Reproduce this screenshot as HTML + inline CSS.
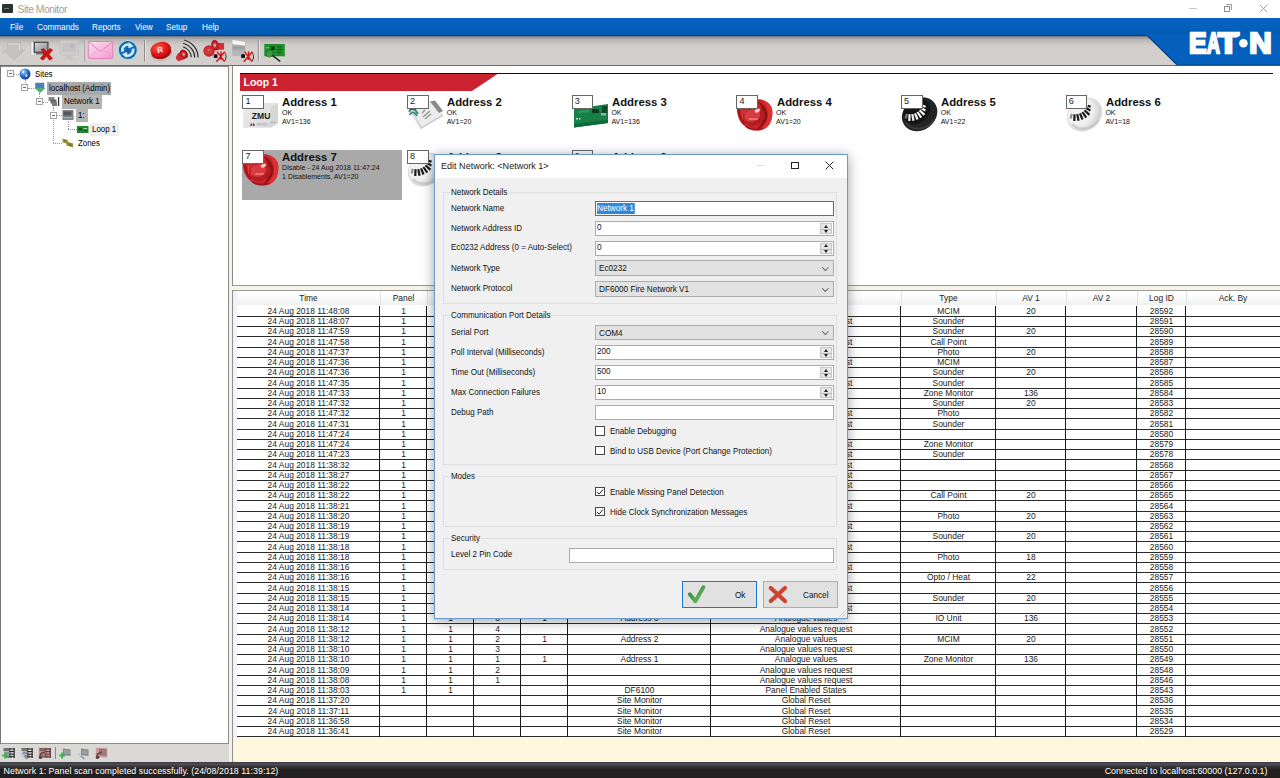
<!DOCTYPE html>
<html><head><meta charset="utf-8"><title>Site Monitor</title>
<style>
*{box-sizing:border-box;margin:0;padding:0}
html,body{width:1280px;height:778px;overflow:hidden;background:#fff}
body{position:relative;font-family:"Liberation Sans",sans-serif;font-size:8.3px;color:#000}
.abs{position:absolute}
.t{position:absolute;white-space:nowrap;line-height:1}
#titlebar{left:0;top:0;width:1280px;height:18px;background:#fff}
#menubar{left:0;top:17.5px;width:1280px;height:17.5px;background:linear-gradient(#0862c2,#055fbd 55%,#0459b0)}
#menubar span{position:absolute;top:4.2px;color:#fff;font-size:9.1px;line-height:10px;transform-origin:0 50%;transform:scaleX(.9)}
#toolbar{left:0;top:34.8px;width:1280px;height:31.5px;background:linear-gradient(#0a2c5e 0,#3a4560 .9px,#8c8d8f 1.7px,#b6b2b2 4.5px,#cdc9c7 9px,#d3cfcd 13px,#d3cfcd 100%);border-bottom:1.4px solid #6c6c6c}
#leftpane{left:0;top:65.5px;width:229px;height:678px;background:#fff;border:1px solid #8c8c8c;border-left:1px solid #777}
#leftbar{left:0;top:743.8px;width:229px;height:19px;background:#dbd9d5}
#split{left:229px;top:65.5px;width:3.5px;height:697.5px;background:#f4f1ea}
#toppane{left:232px;top:65.5px;width:1048px;height:220px;background:#fff;border-left:1.5px solid #8a8a8a;border-bottom:1px solid #9a9a9a}
#gap{left:232px;top:285.5px;width:1048px;height:4px;background:#f7f3e6}
#logpane{left:232px;top:289.5px;width:1048px;height:473.5px;background:#fef7de;border-left:1px solid #8f8f8f;border-top:1px solid #9a9a9a}
#status{left:0;top:762px;width:1280px;height:16px;background:linear-gradient(#3d3e43 0,#4b4b53 2.5px,#383637 4.5px,#2a2725 6.5px,#221f20 8.5px,#221f20 100%);color:#fff}
#status span{position:absolute;top:4.1px;font-size:8.9px;line-height:10px;white-space:nowrap}
.hl{position:absolute;background:#2a2a2a;height:1px;left:237px;width:1043px}
.vl{position:absolute;background:#1a1a1a;width:1px}
.c{position:absolute;text-align:center;white-space:nowrap;font-size:9.1px;line-height:10px;color:#1a1a1a;transform:scaleX(.926)}
.hd{position:absolute;text-align:center;white-space:nowrap;font-size:9.1px;line-height:10px;color:#222;top:292.9px;transform:scaleX(.926)}
.tree{position:absolute;white-space:nowrap;font-size:8.9px;line-height:13px;height:13.4px;padding:0 1.5px}
.tree span{display:inline-block;transform-origin:0 50%;transform:scaleX(.89)}
.exp{position:absolute;width:7px;height:7px;border:1px solid #a4a4a4;background:#fff}
.exp:after{content:"";position:absolute;left:1px;top:2px;width:3px;height:1px;background:#6a6a6a}
.num{position:absolute;width:21.8px;height:13.4px;background:#fff;border:1px solid #666;font-size:9.1px;line-height:10.6px;padding-left:2.2px;color:#222}
.at{position:absolute;white-space:nowrap;font-weight:bold;font-size:11px;line-height:12px;color:#111;transform-origin:0 50%;transform:scaleX(1.03)}
.as{position:absolute;white-space:nowrap;font-size:7px;line-height:8px;color:#111}
#dlg{left:433.5px;top:153.6px;width:414px;height:465.6px;background:#f0f0f0;border:1px solid #6a9bd0;box-shadow:0 1px 10px rgba(20,30,50,.30), 0 4px 14px rgba(0,0,0,.14)}
#dlgtitle{left:0;top:0;width:412px;height:23px;background:#fff}
.gb{position:absolute;border:1px solid #dfdfdf;left:8.8px;width:394.2px}
.gbl{position:absolute;background:#f0f0f0;padding:0 1px;left:15px;font-size:9.1px;line-height:10px;white-space:nowrap;color:#111;transform-origin:0 50%;transform:scaleX(.885)}
.lb{position:absolute;left:16px;font-size:9.1px;line-height:10px;white-space:nowrap;color:#111;transform-origin:0 50%;transform:scaleX(.885)}
.in{position:absolute;left:160.7px;width:238.4px;height:15px;background:#fff;border:1px solid #ababab;font-size:9.1px;line-height:11.2px;padding-left:1.2px;color:#111}
.v{display:inline-block;transform-origin:0 50%;transform:scaleX(.9);white-space:nowrap}
.cb{position:absolute;left:160.7px;width:238.4px;height:15.5px;background:#e2e2e2;border:1px solid #adadad;font-size:9.1px;line-height:14.6px;padding-left:2.4px;color:#111}
.cb:after{content:"";position:absolute;right:5px;top:3.6px;width:3.6px;height:3.6px;border-right:1px solid #5a5a5a;border-bottom:1px solid #5a5a5a;transform:rotate(45deg) }
.sp{position:absolute;right:1px;top:1px;width:11.5px;height:11px;background:linear-gradient(#e6e6e6 0,#e6e6e6 5px,#b8b8b8 5px,#b8b8b8 6px,#e6e6e6 6px);border:1px solid #c8c8c8}
.sp:before{content:"";position:absolute;left:2.7px;top:.8px;border:2.5px solid transparent;border-top:0;border-bottom:3px solid #222}
.sp:after{content:"";position:absolute;left:2.7px;top:6.2px;border:2.5px solid transparent;border-bottom:0;border-top:3px solid #222}
.ck{position:absolute;left:160.7px;width:9.5px;height:9.5px;background:#fff;border:1px solid #484848}
.ckl{position:absolute;left:175.2px;font-size:9.1px;line-height:10px;white-space:nowrap;color:#111;transform-origin:0 50%;transform:scaleX(.885)}
.btn{position:absolute;top:427px;height:27.5px;background:#e1e1e1;border:1px solid #adadad;font-size:9.1px;color:#111}
.btn .t{transform-origin:0 50%;transform:scaleX(.9)}
</style></head><body>

<div id="titlebar" class="abs">
<div class="abs" style="left:2px;top:4.2px;width:11px;height:8.6px;background:#2c3233;border-radius:1px"></div>
<div class="abs" style="left:3.5px;top:7.5px;width:5px;height:1px;background:#6d7676"></div>
<span class="t" style="left:17.5px;top:3.5px;font-size:10.3px;color:#a0a0a0;line-height:12px;letter-spacing:-.45px">Site Monitor</span>
<div class="abs" style="left:1189px;top:8px;width:8px;height:1px;background:#c4c4c4"></div>
<div class="abs" style="left:1223.5px;top:5.5px;width:6px;height:6px;border:1px solid #8c8c8c"></div>
<div class="abs" style="left:1225.5px;top:4px;width:6px;height:6px;border-top:1px solid #9c9c9c;border-right:1px solid #9c9c9c"></div>
<svg class="abs" style="left:1258.5px;top:4px" width="9" height="9" viewBox="0 0 9 9"><path d="M0.7 0.7L8.3 8.3M8.3 0.7L0.7 8.3" stroke="#a0a0a0" stroke-width="1" fill="none"/></svg>
</div>
<div id="menubar" class="abs">
<span style="left:10.2px">File</span>
<span style="left:37.2px">Commands</span>
<span style="left:91.5px">Reports</span>
<span style="left:135.4px">View</span>
<span style="left:166px">Setup</span>
<span style="left:202px">Help</span>
</div>
<div id="toolbar" class="abs"></div>
<svg class="abs" style="left:1130px;top:34px" width="150" height="32" viewBox="1130 34 150 32"><polygon points="1146,34 1280,34 1280,65.2 1177.3,65.2" fill="#055fbd"/><path d="M1147 35.3 L1177 64.8" stroke="#0a3f86" stroke-width="1.2" fill="none"/><rect x="1177" y="64.4" width="103" height="1" fill="#0b4a98"/></svg>
<svg class="abs" style="left:1180px;top:24px" width="100" height="38" viewBox="1180 24 100 38"><g fill="#fff" stroke="#fff" stroke-width="2.4" stroke-linejoin="miter" font-family="Liberation Sans, sans-serif" font-weight="bold" font-size="29.9"><text x="1189.1" y="52.8" textLength="17.5" lengthAdjust="spacingAndGlyphs">E</text><text x="1207" y="52.8" textLength="12.8" lengthAdjust="spacingAndGlyphs">A</text><text x="1218" y="52.8" textLength="20.9" lengthAdjust="spacingAndGlyphs">T</text></g><circle cx="1243.4" cy="43.2" r="8.3" fill="#055fbd"/><circle cx="1243.4" cy="43.2" r="4.3" fill="#fff"/><text x="1249.2" y="52.8" textLength="22.4" lengthAdjust="spacingAndGlyphs" fill="#fff" stroke="#fff" stroke-width="2.4" font-family="Liberation Sans, sans-serif" font-weight="bold" font-size="29.9">N</text></svg>
<svg class="abs" style="left:0;top:35px" width="300" height="31" viewBox="0 35 300 31">
<defs><radialGradient id="rb" cx="40%" cy="35%" r="70%"><stop offset="0" stop-color="#ff5a4a"/><stop offset=".6" stop-color="#e01818"/><stop offset="1" stop-color="#b00c0c"/></radialGradient><linearGradient id="env" x1="0" y1="0" x2="1" y2="1"><stop offset="0" stop-color="#fde0f0"/><stop offset="1" stop-color="#f19ccb"/></linearGradient><linearGradient id="scr" x1="0" y1="0" x2="1" y2="1"><stop offset="0" stop-color="#d8d8d8"/><stop offset="1" stop-color="#8a8a8a"/></linearGradient><linearGradient id="pnl" x1="0" y1="0" x2="0" y2="1"><stop offset="0" stop-color="#f2f2f2"/><stop offset=".45" stop-color="#9a9ea2"/><stop offset="1" stop-color="#c8cacc"/></linearGradient></defs>
<g fill="#c6c2c2" stroke="#bab6b6" stroke-width=".6"><path d="M7 42.5 H21 V50 H25 L14 60 L3 50 H7 Z"/></g><rect x="2" y="44" width="3" height="10" rx="1" fill="#cbc8c8"/><path d="M8.5 44 H19.5 V50" stroke="#dedbdb" stroke-width="1" fill="none"/>
<rect x="31" y="42" width="3.2" height="13.5" rx=".8" fill="#f4f4f4" stroke="#aaa" stroke-width=".5"/><rect x="34.3" y="42.3" width="13.6" height="10" fill="url(#scr)" stroke="#4a4a4a" stroke-width="1.3"/><rect x="36" y="53" width="9" height="1.5" fill="#777"/>
<path d="M41 49.5 L44 48.5 L46.6 52 L50 48.3 L52.8 50 L49 54.2 L52.6 58.6 L49.6 60.3 L46.4 56.3 L43 60.3 L40.2 58.4 L43.9 54.2 Z" fill="#d01010" stroke="#a00808" stroke-width=".4"/>
<rect x="60" y="40.5" width="18.5" height="14.5" rx="1" fill="#cfcccc" stroke="#c2bfbf" stroke-width=".8"/><rect x="62" y="42.5" width="14.5" height="9.5" fill="#c6c4c4"/><rect x="70" y="43.5" width="5" height="5" fill="#bdbbbb"/><rect x="66" y="55" width="6.5" height="3" fill="#c8c5c5"/><rect x="63.5" y="58" width="11.5" height="2" rx="1" fill="#cbc8c8"/>
<rect x="84.5" y="40" width="1" height="21.5" fill="#8f8c8c"/><rect x="85.5" y="40" width="1" height="21.5" fill="#e6e3e3"/>
<rect x="144.0" y="40" width="1" height="21.5" fill="#8f8c8c"/><rect x="145.0" y="40" width="1" height="21.5" fill="#e6e3e3"/>
<rect x="257.9" y="40" width="1" height="21.5" fill="#8f8c8c"/><rect x="258.9" y="40" width="1" height="21.5" fill="#e6e3e3"/>
<rect x="88.3" y="41.5" width="24.5" height="17" rx="1.5" fill="url(#env)" stroke="#e57fbb" stroke-width="1"/><path d="M89 42.3 L100.5 51.5 L112.2 42.3" stroke="#e57fbb" stroke-width="1" fill="none"/><path d="M89 57.8 L97.5 49.5 M112.2 57.8 L103.6 49.5" stroke="#ec95c6" stroke-width=".9" fill="none"/>
<circle cx="127.8" cy="50.1" r="10" fill="#a9d9f6" opacity=".85"/><circle cx="127.8" cy="50.1" r="9" fill="#1a68a4"/><circle cx="127.8" cy="50.1" r="6.6" fill="#1b6fc0"/>
<g fill="none" stroke="#cfeeff" stroke-width="2.5"><path d="M122.6 51.6 A5.4 5.4 0 0 1 130.2 45.2"/><path d="M133 48.6 A5.4 5.4 0 0 1 125.4 55"/></g><polygon points="128.8,42.2 133.6,46 128.4,48.4" fill="#cfeeff"/><polygon points="126.8,58 122,54.2 127.2,51.8" fill="#cfeeff"/><path d="M126.3 47.8 L130 49 L128.6 53 L126 52 Z" fill="#0f5aa8"/>
<ellipse cx="161.5" cy="53.5" rx="10.2" ry="7" fill="#e8e4e4" stroke="#9a9696" stroke-width=".6" transform="rotate(-12 161.5 53.5)"/><ellipse cx="161.3" cy="52.3" rx="10" ry="6.8" fill="#a80c0c" transform="rotate(-12 161.3 52.3)"/><ellipse cx="160.8" cy="49.6" rx="10.4" ry="7.6" fill="url(#rb)" transform="rotate(-12 160.8 49.6)"/>
<text x="157" y="52.6" font-family="Liberation Sans, sans-serif" font-weight="bold" font-size="8.2" fill="#ffe9e9" transform="rotate(-12 160 49)">R</text>
<g fill="none" stroke="#2a2a2a" stroke-width="1.15"><path d="M184.2 40 C192.5 42.5 198.2 49.5 198 57.6"/><path d="M183.2 43.3 C190 45.3 194.8 51 194.7 57.6"/><path d="M183.2 46.9 C187.8 48.4 191.2 52.5 191.2 57.3"/></g>
<ellipse cx="179.6" cy="57.4" rx="3.7" ry="3.3" fill="#cf2c33" transform="rotate(-35 179.6 57.4)"/><path d="M177 54.6 L182 50.5 L187 57.5 L182.3 60.3 Z" fill="#c9252c"/><ellipse cx="184" cy="54" rx="3.5" ry="4.9" fill="#ad141c" transform="rotate(-38 184 54)"/><ellipse cx="183.8" cy="54.2" rx="2.1" ry="3" fill="#c8323a" transform="rotate(-38 183.8 54.2)"/><circle cx="183.6" cy="54.4" r="1.15" fill="#ffb0b6"/>
<rect x="217.5" y="43" width="6.6" height="6.8" rx="1" fill="#d23038"/><path d="M213 40.5 L219 43 L219 50 L213.5 50.5 Z" fill="#c8262e"/><ellipse cx="214.7" cy="45.1" rx="3.5" ry="5.3" fill="#b3161e"/><ellipse cx="214.8" cy="45.2" rx="2.1" ry="3.3" fill="#cc3a42"/><circle cx="214.8" cy="45.3" r="1.2" fill="#ffb4ba"/>
<circle cx="209" cy="51" r="5.7" fill="#c6262d"/><circle cx="208.6" cy="50.6" r="3.6" fill="#d23a40"/><circle cx="208.8" cy="50" r=".7" fill="#e8a040"/>
<rect x="213.8" y="54.3" width="3.6" height="3.6" fill="#0c0c0c"/><path d="M224.3 52.3 C226.6 55 226.6 58.6 224.3 61.4" stroke="#1a1a1a" stroke-width=".9" fill="none"/><path d="M217 51.6 L224.6 61.6 M224.8 51.8 L216.4 61.8 M221 51.5 V60" stroke="#d8141c" stroke-width="1.5" fill="none"/>
<polygon points="232.5,40 245,42 245,56 232.5,55.5" fill="url(#pnl)" stroke="#a8a8a8" stroke-width=".5"/><polygon points="232.5,40 245,42 245,45.5 232.5,44" fill="#f6f6f6"/><polygon points="232.5,50 245,51 245,56 232.5,55.5" fill="#b4b8bc"/>
<rect x="241.2" y="54.3" width="3.8" height="3.6" fill="#0c0c0c"/><path d="M251.8 52.3 C254.1 55 254.1 58.6 251.8 61.4" stroke="#1a1a1a" stroke-width=".9" fill="none"/><path d="M244.5 51.6 L252.1 61.6 M252.3 51.8 L243.9 61.8 M248.5 51.5 V60" stroke="#d8141c" stroke-width="1.5" fill="none"/>
<rect x="264.3" y="44" width="20.5" height="12.3" fill="#1f8f2c"/><rect x="271" y="46.5" width="3.6" height="3.6" fill="#0b3a12"/><rect x="277" y="46.3" width="5" height="1.2" fill="#0d5a18"/><rect x="277" y="49" width="5" height="1.2" fill="#0d5a18"/><rect x="277" y="52" width="4" height="1.2" fill="#0d5a18"/><rect x="266" y="47" width="3" height="1.2" fill="#66c070"/>
<circle cx="269.5" cy="53.5" r="3.6" fill="#3f9f48" fill-opacity=".7" stroke="#226a2a" stroke-width=".8"/><path d="M272.5 55.5 L280.3 61.5" stroke="#111" stroke-width="1.5" fill="none"/>
</svg>
<div id="leftpane" class="abs"></div>
<div id="leftbar" class="abs"></div>
<div id="split" class="abs"></div>
<div class="abs" style="left:14.0px;top:73.9px;width:5.0px;height:0;border-top:1px dotted #9a9a9a"></div>
<div class="abs" style="left:24.5px;top:79.0px;width:0;height:5.7px;border-left:1px dotted #9a9a9a"></div>
<div class="abs" style="left:28.0px;top:87.7px;width:6.0px;height:0;border-top:1px dotted #9a9a9a"></div>
<div class="abs" style="left:38.8px;top:93.0px;width:0;height:5.5px;border-left:1px dotted #9a9a9a"></div>
<div class="abs" style="left:43.0px;top:101.5px;width:5.0px;height:0;border-top:1px dotted #9a9a9a"></div>
<div class="abs" style="left:53.3px;top:107.0px;width:0;height:35.9px;border-left:1px dotted #9a9a9a"></div>
<div class="abs" style="left:57.0px;top:115.3px;width:5.0px;height:0;border-top:1px dotted #9a9a9a"></div>
<div class="abs" style="left:67.7px;top:121.0px;width:0;height:8.1px;border-left:1px dotted #9a9a9a"></div>
<div class="abs" style="left:67.7px;top:129.1px;width:9.3px;height:0;border-top:1px dotted #9a9a9a"></div>
<div class="abs" style="left:53.3px;top:142.9px;width:8.7px;height:0;border-top:1px dotted #9a9a9a"></div>
<div class="exp" style="left:7.0px;top:70.4px"></div>
<div class="exp" style="left:21.3px;top:84.2px"></div>
<div class="exp" style="left:35.7px;top:98.0px"></div>
<div class="exp" style="left:50.0px;top:111.8px"></div>
<svg class="abs" style="left:19px;top:67.7px" width="12" height="12" viewBox="0 0 12 12"><defs><radialGradient id="gl" cx="35%" cy="30%" r="75%"><stop offset="0" stop-color="#9fd0ff"/><stop offset=".5" stop-color="#2f74d0"/><stop offset="1" stop-color="#123a8a"/></radialGradient></defs><circle cx="6" cy="6" r="5.5" fill="url(#gl)"/><path d="M3.5 2.5 C5 2 6 3.5 5 5 C4 6 3 5 3.5 2.5 Z M6.5 6 C8 5.5 9 7 8 9 C7 9.5 6 8 6.5 6 Z" fill="#e8f3ff" opacity=".85"/></svg>
<svg class="abs" style="left:34px;top:81.7px" width="12" height="12" viewBox="0 0 12 12"><rect x="1.5" y="1" width="8.5" height="5.5" fill="#4a7fc8" stroke="#777" stroke-width=".6"/><polygon points="0.5,6 11.5,6 6,11" fill="#4fb06a"/></svg>
<svg class="abs" style="left:48px;top:95.5px" width="12" height="12" viewBox="0 0 12 12"><rect x="0.5" y="1" width="6" height="4" fill="#8a8a8a"/><rect x="2.5" y="3.5" width="6" height="4" fill="#6a6a6a"/><rect x="4" y="6" width="5" height="4" fill="#7a7a7a"/><rect x="10" y="1" width="1.2" height="9" fill="#333"/></svg>
<svg class="abs" style="left:62px;top:109.3px" width="12" height="12" viewBox="0 0 12 12"><rect x="0.5" y="1" width="11" height="10" fill="#808488"/><rect x="1.5" y="2.5" width="8" height="4" fill="#55595e"/><rect x="1.5" y="8" width="9" height="1.5" fill="#9aa"/></svg>
<svg class="abs" style="left:77px;top:125.6px" width="12" height="8" viewBox="0 0 12 8"><rect x="0" y="0" width="11.5" height="7" fill="#1f8a2c"/><rect x="1.5" y="2" width="3.5" height="2.5" fill="#0f5a1a"/><rect x="6.5" y="2" width="3.5" height="1" fill="#9fe0a8"/><rect x="6.5" y="4" width="3.5" height="1" fill="#0f5a1a"/></svg>
<svg class="abs" style="left:62px;top:137.9px" width="12" height="10" viewBox="0 0 12 10"><polygon points="0.5,0.5 6,2 6,6 0.5,4.5" fill="#a89a3a"/><polygon points="4.5,3.5 11,5.5 11,9.5 4.5,7.5" fill="#8f8a30"/><rect x="2" y="2" width="2" height="1.5" fill="#5a7a2a"/><rect x="7" y="6" width="2" height="1.5" fill="#5a7a2a"/></svg>
<div class="tree" style="left:33.5px;top:67.7px;width:30.0px;"><span>Sites</span></div>
<div class="tree" style="left:47.3px;top:81.5px;width:63.5px;background:#a9a9a9"><span>localhost (Admin)</span></div>
<div class="tree" style="left:62.3px;top:95.3px;width:40.0px;background:#b4b4b4"><span>Network 1</span></div>
<div class="tree" style="left:76.0px;top:109.1px;width:12.3px;background:#b4b4b4"><span>1:</span></div>
<div class="tree" style="left:90.0px;top:122.9px;width:29.0px;background:#efefef"><span>Loop 1</span></div>
<div class="tree" style="left:76.5px;top:136.7px;width:30.0px;"><span>Zones</span></div>
<svg class="abs" style="left:2.3px;top:746.6px" width="14" height="13" viewBox="0 0 14 13"><rect x="1.5" y="1" width="7" height="3" fill="#6d7276"/><rect x="2.5" y="4.5" width="6.5" height="3" fill="#8a9096"/><rect x="4" y="8" width="5.5" height="2.8" fill="#7a8086"/><path d="M7 2 H12.3 M7 4.6 H12.3 M7 7.2 H12.3 M7 9.8 H12.3" stroke="#1c1c1c" stroke-width="1"/><rect x="11.6" y="1" width="1.1" height="10" fill="#1c1c1c"/><path d="M3.2 5.5 V11.5 M0.3 8.5 H6.2" stroke="#35b848" stroke-width="2"/></svg>
<svg class="abs" style="left:20.0px;top:746.6px" width="14" height="13" viewBox="0 0 14 13"><rect x="1.5" y="1" width="7" height="3" fill="#6d7276"/><rect x="2.5" y="4.5" width="6.5" height="3" fill="#8a9096"/><rect x="4" y="8" width="5.5" height="2.8" fill="#7a8086"/><path d="M7 2 H12.3 M7 4.6 H12.3 M7 7.2 H12.3 M7 9.8 H12.3" stroke="#1c1c1c" stroke-width="1"/><rect x="11.6" y="1" width="1.1" height="10" fill="#1c1c1c"/><path d="M1 6.5 L6.5 11.5" stroke="#b9cbe0" stroke-width="2.2"/><path d="M4 9 L7.5 12" stroke="#8a9097" stroke-width="1.5"/></svg>
<svg class="abs" style="left:37.5px;top:746.6px" width="14" height="13" viewBox="0 0 14 13"><rect x="1.5" y="1" width="7" height="3" fill="#6d7276"/><rect x="2.5" y="4.5" width="6.5" height="3" fill="#8a9096"/><rect x="4" y="8" width="5.5" height="2.8" fill="#7a8086"/><path d="M7 2 H12.3 M7 4.6 H12.3 M7 7.2 H12.3 M7 9.8 H12.3" stroke="#1c1c1c" stroke-width="1"/><rect x="11.6" y="1" width="1.1" height="10" fill="#1c1c1c"/><rect x="0.8" y="0.8" width="11.5" height="9.5" fill="#b05050" opacity=".45"/><path d="M2 11.5 L2.5 7 L7 5" stroke="#6a4a40" stroke-width="1.6" fill="none"/><circle cx="2.6" cy="10.3" r="1.8" fill="#5a4038"/></svg>
<svg class="abs" style="left:59.3px;top:746.6px" width="14" height="13" viewBox="0 0 14 13"><polygon points="4,1.5 11.5,2.5 11.5,9 4,8" fill="#80868c"/><polygon points="4.8,2.8 10.6,3.6 10.6,7.6 4.8,6.8" fill="#9aa0a6"/><path d="M3.2 5.5 V11.5 M0.3 8.5 H6.2" stroke="#35b848" stroke-width="2"/></svg>
<svg class="abs" style="left:77.0px;top:746.6px" width="14" height="13" viewBox="0 0 14 13"><polygon points="4,1.5 11.5,2.5 11.5,9 4,8" fill="#80868c"/><polygon points="4.8,2.8 10.6,3.6 10.6,7.6 4.8,6.8" fill="#9aa0a6"/><path d="M1 6.5 L6.5 11.5" stroke="#b9cbe0" stroke-width="2.2"/><path d="M4 9 L7.5 12" stroke="#8a9097" stroke-width="1.5"/></svg>
<svg class="abs" style="left:95.0px;top:746.6px" width="14" height="13" viewBox="0 0 14 13"><polygon points="4,1.5 11.5,2.5 11.5,9 4,8" fill="#80868c"/><polygon points="4.8,2.8 10.6,3.6 10.6,7.6 4.8,6.8" fill="#9aa0a6"/><rect x="0.8" y="0.8" width="11.5" height="9.5" fill="#b05050" opacity=".45"/><path d="M2 11.5 L2.5 7 L7 5" stroke="#6a4a40" stroke-width="1.6" fill="none"/><circle cx="2.6" cy="10.3" r="1.8" fill="#5a4038"/></svg>
<div class="abs" style="left:54.8px;top:747px;width:1px;height:11.5px;background:#8a8a8a"></div>
<div id="toppane" class="abs"></div>
<div class="abs" style="left:240px;top:72.6px;width:1033px;height:1.4px;background:#111"></div>
<svg class="abs" style="left:240px;top:73.5px" width="262" height="17" viewBox="0 0 262 17"><polygon points="0,0 257.5,0 232,17 0,17" fill="#cb2330"/></svg>
<span class="t" style="left:243.5px;top:76.3px;font-size:10.5px;font-weight:bold;color:#fff;line-height:12px">Loop 1</span>
<svg width="0" height="0" style="position:absolute"><defs>
<radialGradient id="gred" cx="45%" cy="45%" r="60%"><stop offset="0" stop-color="#e8484a"/><stop offset=".55" stop-color="#c62026"/><stop offset="1" stop-color="#9a1216"/></radialGradient>
<radialGradient id="gblk" cx="40%" cy="35%" r="70%"><stop offset="0" stop-color="#3a3a3a"/><stop offset="1" stop-color="#1c1c1c"/></radialGradient>
<radialGradient id="gwht" cx="40%" cy="35%" r="75%"><stop offset="0" stop-color="#ffffff"/><stop offset=".6" stop-color="#ececec"/><stop offset="1" stop-color="#c4c4c4"/></radialGradient>
<linearGradient id="gzmu" x1="0" y1="0" x2="1" y2="1"><stop offset="0" stop-color="#ececec"/><stop offset="1" stop-color="#dadada"/></linearGradient>
</defs></svg>
<div class="abs" style="left:242px;top:150.2px;width:160px;height:50px;background:#a9a9a9"></div>
<svg class="abs" style="left:241.2px;top:95.8px" width="42" height="38" viewBox="0 0 42 38"><polygon points="2.5,11 9.5,7 37,7 37,27.5 30,31.5 2.5,31.5" fill="#e2e2e2"/><polygon points="2.5,11 30,11 30,31.5 2.5,31.5" fill="url(#gzmu)"/><polygon points="30,11 37,7 37,27.5 30,31.5" fill="#d6d6d6"/><text x="10.8" y="23" font-family="Liberation Sans, sans-serif" font-weight="bold" font-size="8.4" fill="#1a1a1a" textLength="18.5" lengthAdjust="spacingAndGlyphs">ZMU</text><path d="M9 29.8 L10.2 26.6 L11.4 29.8 Z M11.6 29.8 L12.8 26.6 L14 29.8 Z" fill="#444"/><rect x="15.5" y="26.8" width="11" height="2.8" fill="#c4c4c4"/><rect x="29" y="25.8" width="6" height=".9" fill="#aaa"/></svg>
<div class="num" style="left:242.2px;top:95.3px">1</div>
<div class="at" style="left:282.4px;top:95.7px">Address 1</div>
<div class="as" style="left:282.1px;top:108.6px">OK</div>
<div class="as" style="left:282.1px;top:117.6px">AV1=136</div>
<svg class="abs" style="left:405.9px;top:95.8px" width="42" height="38" viewBox="0 0 42 38"><polygon points="4,15 24,5 37,18 14,32" fill="#ececec"/><polygon points="4,15 14,32 16,31 6,15" fill="#d6d6d6"/><polygon points="14,32 37,18 37,20 15,33" fill="#c9c9c9"/><polygon points="24,5.5 29,4.5 37,15 33,17" fill="#8a8a8a"/><path d="M3 16 C5 12 9 12 12 18 M3.5 19 C6 15 9 16 11 20" stroke="#3f8f86" stroke-width="1.8" fill="none"/><path d="M4 14 C6 12 8 12 10 13.5" stroke="#444" stroke-width="1.4" fill="none"/><path d="M16 17 L19 14 M17 21 L24 15 M19 23 L25 18" stroke="#999" stroke-width="1.6" fill="none"/></svg>
<div class="num" style="left:406.9px;top:95.3px">2</div>
<div class="at" style="left:447.1px;top:95.7px">Address 2</div>
<div class="as" style="left:446.7px;top:108.6px">OK</div>
<div class="as" style="left:446.7px;top:117.6px">AV1=20</div>
<svg class="abs" style="left:570.6px;top:95.8px" width="42" height="38" viewBox="0 0 42 38"><polygon points="3,13 37,8 37,27 3,31.5" fill="#168046"/><polygon points="3,28 37,23.5 37,27 3,31.5" fill="#0f6a3a"/><rect x="21" y="13" width="7" height="4" fill="#0b3a22"/><rect x="31" y="10" width="5" height="7" fill="#0c4a2a"/><rect x="5" y="22" width="2" height="1.5" fill="#bfe8cf"/><rect x="8" y="22" width="1.5" height="1.5" fill="#bfe8cf"/><rect x="30" y="17" width="5" height="2.5" fill="#8fb8a0"/><polygon points="7,15 18,13.5 18,16 7,17.5" fill="#2a9a5c"/></svg>
<div class="num" style="left:571.6px;top:95.3px">3</div>
<div class="at" style="left:611.8px;top:95.7px">Address 3</div>
<div class="as" style="left:611.4px;top:108.6px">OK</div>
<div class="as" style="left:611.4px;top:117.6px">AV1=136</div>
<svg class="abs" style="left:735.3px;top:95.8px" width="42" height="38" viewBox="0 0 42 38"><path d="M1.9 14 C2 9 8 6 14 6.5 C17 3 22 2.2 26 3.5 C32 5 37 9 37.3 15 C37.6 21 36.5 26 33.5 29.5 C30 33.5 25 35 20.5 34.6 C15 34.5 11 32 8.5 29 C5 26.5 2.5 21 1.9 14 Z" fill="#c8242a"/><path d="M26 3.5 C32 5 37 9 37.3 15 C37.6 21 36.5 26 33.5 29.5 C31 32.5 27.5 34 24 34.4 C31 30 34 23 33 16 C32.3 10.5 29.5 6 26 3.5 Z" fill="#de3030"/><path d="M22 5 C28 7.5 32 12 32.3 18 C32.6 25 28.5 30.5 22.5 33 C27 28 28.6 23 28 17.5 C27.5 12 25.5 8 22 5 Z" fill="#8e1216"/><ellipse cx="19" cy="20.5" rx="11" ry="9.3" fill="#b51c22" transform="rotate(-20 19 20.5)"/><ellipse cx="17.5" cy="19.5" rx="8" ry="6.2" fill="#d63a3e" transform="rotate(-20 17.5 19.5)"/><path d="M3.5 14 C4.5 19 6.5 24 9.5 28" stroke="#a3161b" stroke-width="2.2" fill="none"/><path d="M7.5 14 V23 M10.2 13.5 V25 M13 13.5 V26" stroke="#e04a4e" stroke-width="1" fill="none" opacity=".8"/><ellipse cx="22.5" cy="14.6" rx="3" ry="1.7" fill="#ffc4c4" transform="rotate(-25 22.5 14.6)"/><path d="M14.5 23 H22.5" stroke="#ff9c9c" stroke-width="1.3" stroke-dasharray="2.2 .8"/><path d="M11 30.5 C15 33.8 22 34.6 28 32" stroke="#7c0c10" stroke-width="1.6" fill="none" opacity=".55"/></svg>
<div class="num" style="left:736.3px;top:95.3px">4</div>
<div class="at" style="left:776.5px;top:95.7px">Address 4</div>
<div class="as" style="left:776.1px;top:108.6px">OK</div>
<div class="as" style="left:776.1px;top:117.6px">AV1=20</div>
<svg class="abs" style="left:899.9px;top:95.8px" width="42" height="38" viewBox="0 0 42 38"><ellipse cx="19.6" cy="18.3" rx="18.8" ry="15.8" fill="#242424" transform="rotate(-38 19.6 18.3)"/><ellipse cx="17" cy="15.5" rx="14.5" ry="11.5" fill="#141414" transform="rotate(-38 17 15.5)"/><path d="M6 27 C12 35 26 35 34 24" stroke="#3a3a3a" stroke-width="2" fill="none"/><line x1="6.8" y1="17.9" x2="5.6" y2="22.5" stroke="#f4f4f4" stroke-width="2.2" opacity="0.45"/><line x1="9.5" y1="18.3" x2="9.3" y2="25.0" stroke="#f4f4f4" stroke-width="2.2" opacity="1"/><line x1="12.3" y1="18.1" x2="13.5" y2="24.7" stroke="#f4f4f4" stroke-width="2.2" opacity="1"/><line x1="15.0" y1="17.3" x2="17.5" y2="23.5" stroke="#f4f4f4" stroke-width="2.2" opacity="1"/><line x1="17.4" y1="16.0" x2="21.2" y2="21.6" stroke="#f4f4f4" stroke-width="2.2" opacity="1"/><line x1="19.6" y1="14.2" x2="24.4" y2="18.9" stroke="#f4f4f4" stroke-width="2.2" opacity="1"/><line x1="21.3" y1="12.0" x2="25.4" y2="14.6" stroke="#f4f4f4" stroke-width="2.2" opacity="1"/><line x1="22.8" y1="9.7" x2="25.6" y2="10.7" stroke="#f4f4f4" stroke-width="2.2" opacity="1"/></svg>
<div class="num" style="left:900.9px;top:95.3px">5</div>
<div class="at" style="left:941.1px;top:95.7px">Address 5</div>
<div class="as" style="left:940.7px;top:108.6px">OK</div>
<div class="as" style="left:940.7px;top:117.6px">AV1=22</div>
<svg class="abs" style="left:1064.6px;top:95.8px" width="42" height="38" viewBox="0 0 42 38"><ellipse cx="19.6" cy="18.5" rx="18.8" ry="15.8" fill="#d9d9d9" transform="rotate(-38 19.6 18.5)"/><ellipse cx="19.2" cy="18" rx="17.6" ry="14.6" fill="url(#gwht)" transform="rotate(-38 19.2 18)"/><ellipse cx="16.5" cy="15" rx="13.5" ry="10.5" fill="#f1f1f1" transform="rotate(-38 16.5 15)"/><path d="M7 28 C13 35 26 34.5 33.5 24.5" stroke="#c4c4c4" stroke-width="2.4" fill="none" opacity=".8"/><line x1="6.8" y1="17.9" x2="5.6" y2="22.5" stroke="#1a1a1a" stroke-width="2.2" opacity="0.45"/><line x1="9.5" y1="18.3" x2="9.3" y2="25.0" stroke="#1a1a1a" stroke-width="2.2" opacity="1"/><line x1="12.3" y1="18.1" x2="13.5" y2="24.7" stroke="#1a1a1a" stroke-width="2.2" opacity="1"/><line x1="15.0" y1="17.3" x2="17.5" y2="23.5" stroke="#1a1a1a" stroke-width="2.2" opacity="1"/><line x1="17.4" y1="16.0" x2="21.2" y2="21.6" stroke="#1a1a1a" stroke-width="2.2" opacity="1"/><line x1="19.6" y1="14.2" x2="24.4" y2="18.9" stroke="#1a1a1a" stroke-width="2.2" opacity="1"/><line x1="21.3" y1="12.0" x2="25.4" y2="14.6" stroke="#1a1a1a" stroke-width="2.2" opacity="1"/><line x1="22.8" y1="9.7" x2="25.6" y2="10.7" stroke="#1a1a1a" stroke-width="2.2" opacity="1"/></svg>
<div class="num" style="left:1065.6px;top:95.3px">6</div>
<div class="at" style="left:1105.8px;top:95.7px">Address 6</div>
<div class="as" style="left:1105.4px;top:108.6px">OK</div>
<div class="as" style="left:1105.4px;top:117.6px">AV1=18</div>
<svg class="abs" style="left:241.2px;top:150.7px" width="42" height="38" viewBox="0 0 42 38"><path d="M1.9 14 C2 9 8 6 14 6.5 C17 3 22 2.2 26 3.5 C32 5 37 9 37.3 15 C37.6 21 36.5 26 33.5 29.5 C30 33.5 25 35 20.5 34.6 C15 34.5 11 32 8.5 29 C5 26.5 2.5 21 1.9 14 Z" fill="#c8242a"/><path d="M26 3.5 C32 5 37 9 37.3 15 C37.6 21 36.5 26 33.5 29.5 C31 32.5 27.5 34 24 34.4 C31 30 34 23 33 16 C32.3 10.5 29.5 6 26 3.5 Z" fill="#de3030"/><path d="M22 5 C28 7.5 32 12 32.3 18 C32.6 25 28.5 30.5 22.5 33 C27 28 28.6 23 28 17.5 C27.5 12 25.5 8 22 5 Z" fill="#8e1216"/><ellipse cx="19" cy="20.5" rx="11" ry="9.3" fill="#b51c22" transform="rotate(-20 19 20.5)"/><ellipse cx="17.5" cy="19.5" rx="8" ry="6.2" fill="#d63a3e" transform="rotate(-20 17.5 19.5)"/><path d="M3.5 14 C4.5 19 6.5 24 9.5 28" stroke="#a3161b" stroke-width="2.2" fill="none"/><path d="M7.5 14 V23 M10.2 13.5 V25 M13 13.5 V26" stroke="#e04a4e" stroke-width="1" fill="none" opacity=".8"/><ellipse cx="22.5" cy="14.6" rx="3" ry="1.7" fill="#ffc4c4" transform="rotate(-25 22.5 14.6)"/><path d="M14.5 23 H22.5" stroke="#ff9c9c" stroke-width="1.3" stroke-dasharray="2.2 .8"/><path d="M11 30.5 C15 33.8 22 34.6 28 32" stroke="#7c0c10" stroke-width="1.6" fill="none" opacity=".55"/></svg>
<div class="num" style="left:242.2px;top:150.2px">7</div>
<div class="at" style="left:282.4px;top:150.6px">Address 7</div>
<div class="as" style="left:282.1px;top:163.5px">Disable - 24 Aug 2018 11:47:24</div>
<div class="as" style="left:282.1px;top:172.5px">1 Disablements, AV1=20</div>
<svg class="abs" style="left:405.9px;top:150.7px" width="42" height="38" viewBox="0 0 42 38"><ellipse cx="19.6" cy="18.5" rx="18.8" ry="15.8" fill="#d9d9d9" transform="rotate(-38 19.6 18.5)"/><ellipse cx="19.2" cy="18" rx="17.6" ry="14.6" fill="url(#gwht)" transform="rotate(-38 19.2 18)"/><ellipse cx="16.5" cy="15" rx="13.5" ry="10.5" fill="#f1f1f1" transform="rotate(-38 16.5 15)"/><path d="M7 28 C13 35 26 34.5 33.5 24.5" stroke="#c4c4c4" stroke-width="2.4" fill="none" opacity=".8"/><line x1="6.8" y1="17.9" x2="5.6" y2="22.5" stroke="#1a1a1a" stroke-width="2.2" opacity="0.45"/><line x1="9.5" y1="18.3" x2="9.3" y2="25.0" stroke="#1a1a1a" stroke-width="2.2" opacity="1"/><line x1="12.3" y1="18.1" x2="13.5" y2="24.7" stroke="#1a1a1a" stroke-width="2.2" opacity="1"/><line x1="15.0" y1="17.3" x2="17.5" y2="23.5" stroke="#1a1a1a" stroke-width="2.2" opacity="1"/><line x1="17.4" y1="16.0" x2="21.2" y2="21.6" stroke="#1a1a1a" stroke-width="2.2" opacity="1"/><line x1="19.6" y1="14.2" x2="24.4" y2="18.9" stroke="#1a1a1a" stroke-width="2.2" opacity="1"/><line x1="21.3" y1="12.0" x2="25.4" y2="14.6" stroke="#1a1a1a" stroke-width="2.2" opacity="1"/><line x1="22.8" y1="9.7" x2="25.6" y2="10.7" stroke="#1a1a1a" stroke-width="2.2" opacity="1"/></svg>
<div class="num" style="left:406.9px;top:150.2px">8</div>
<div class="at" style="left:447.1px;top:150.6px">Address 8</div>
<div class="as" style="left:446.7px;top:163.5px">OK</div>
<div class="as" style="left:446.7px;top:172.5px">AV1=20</div>
<svg class="abs" style="left:570.6px;top:150.7px" width="42" height="38" viewBox="0 0 42 38"><polygon points="3,13 37,8 37,27 3,31.5" fill="#168046"/><polygon points="3,28 37,23.5 37,27 3,31.5" fill="#0f6a3a"/><rect x="21" y="13" width="7" height="4" fill="#0b3a22"/><rect x="31" y="10" width="5" height="7" fill="#0c4a2a"/><rect x="5" y="22" width="2" height="1.5" fill="#bfe8cf"/><rect x="8" y="22" width="1.5" height="1.5" fill="#bfe8cf"/><rect x="30" y="17" width="5" height="2.5" fill="#8fb8a0"/><polygon points="7,15 18,13.5 18,16 7,17.5" fill="#2a9a5c"/></svg>
<div class="num" style="left:571.6px;top:150.2px">9</div>
<div class="at" style="left:611.8px;top:150.6px">Address 9</div>
<div class="as" style="left:611.4px;top:163.5px">OK</div>
<div class="as" style="left:611.4px;top:172.5px">AV1=20</div>
<div id="gap" class="abs"></div>
<div id="logpane" class="abs"></div>
<div class="abs" style="left:237px;top:290.5px;width:1043px;height:15px;background:linear-gradient(#fff,#fbfbfb 45%,#f0f0f0);border-bottom:1px solid #d8d8d8"></div>
<div class="abs" style="left:237px;top:305.3px;width:1043px;height:431.30px;background:#fff"></div>
<div class="abs" style="left:233px;top:291px;width:4px;height:445.50px;background:#eff3f9"></div>
<div class="hd" style="left:237px;width:143px">Time</div>
<div class="hd" style="left:380px;width:47px">Panel</div>
<div class="hd" style="left:427px;width:47px">Loop</div>
<div class="hd" style="left:474px;width:47px">Addr</div>
<div class="hd" style="left:521px;width:47px">Zone</div>
<div class="hd" style="left:568px;width:143px">Description</div>
<div class="hd" style="left:711px;width:190px">Event</div>
<div class="hd" style="left:901px;width:95px">Type</div>
<div class="hd" style="left:996px;width:70px">AV 1</div>
<div class="hd" style="left:1066px;width:71px">AV 2</div>
<div class="hd" style="left:1137px;width:49px">Log ID</div>
<div class="hd" style="left:1186px;width:94px">Ack. By</div>
<div class="abs" style="left:379.5px;top:291px;width:1px;height:14px;background:#e3e3e3"></div>
<div class="abs" style="left:426.5px;top:291px;width:1px;height:14px;background:#e3e3e3"></div>
<div class="abs" style="left:473.5px;top:291px;width:1px;height:14px;background:#e3e3e3"></div>
<div class="abs" style="left:520.5px;top:291px;width:1px;height:14px;background:#e3e3e3"></div>
<div class="abs" style="left:567.5px;top:291px;width:1px;height:14px;background:#e3e3e3"></div>
<div class="abs" style="left:710.5px;top:291px;width:1px;height:14px;background:#e3e3e3"></div>
<div class="abs" style="left:900.5px;top:291px;width:1px;height:14px;background:#e3e3e3"></div>
<div class="abs" style="left:995.5px;top:291px;width:1px;height:14px;background:#e3e3e3"></div>
<div class="abs" style="left:1065.5px;top:291px;width:1px;height:14px;background:#e3e3e3"></div>
<div class="abs" style="left:1136.5px;top:291px;width:1px;height:14px;background:#e3e3e3"></div>
<div class="abs" style="left:1185.5px;top:291px;width:1px;height:14px;background:#e3e3e3"></div>
<div class="c" style="left:237px;width:143px;top:305.75px">24 Aug 2018 11:48:08</div>
<div class="c" style="left:380px;width:47px;top:305.75px">1</div>
<div class="c" style="left:711px;width:190px;top:305.75px">Analogue values</div>
<div class="c" style="left:901px;width:95px;top:305.75px">MCIM</div>
<div class="c" style="left:996px;width:70px;top:305.75px">20</div>
<div class="c" style="left:1137px;width:49px;top:305.75px">28592</div>
<div class="c" style="left:237px;width:143px;top:316.00px">24 Aug 2018 11:48:07</div>
<div class="c" style="left:380px;width:47px;top:316.00px">1</div>
<div class="c" style="left:711px;width:190px;top:316.00px">Analogue values request</div>
<div class="c" style="left:901px;width:95px;top:316.00px">Sounder</div>
<div class="c" style="left:1137px;width:49px;top:316.00px">28591</div>
<div class="c" style="left:237px;width:143px;top:326.25px">24 Aug 2018 11:47:59</div>
<div class="c" style="left:380px;width:47px;top:326.25px">1</div>
<div class="c" style="left:711px;width:190px;top:326.25px">Analogue values</div>
<div class="c" style="left:901px;width:95px;top:326.25px">Sounder</div>
<div class="c" style="left:996px;width:70px;top:326.25px">20</div>
<div class="c" style="left:1137px;width:49px;top:326.25px">28590</div>
<div class="c" style="left:237px;width:143px;top:336.50px">24 Aug 2018 11:47:58</div>
<div class="c" style="left:380px;width:47px;top:336.50px">1</div>
<div class="c" style="left:711px;width:190px;top:336.50px">Analogue values request</div>
<div class="c" style="left:901px;width:95px;top:336.50px">Call Point</div>
<div class="c" style="left:1137px;width:49px;top:336.50px">28589</div>
<div class="c" style="left:237px;width:143px;top:346.75px">24 Aug 2018 11:47:37</div>
<div class="c" style="left:380px;width:47px;top:346.75px">1</div>
<div class="c" style="left:711px;width:190px;top:346.75px">Analogue values</div>
<div class="c" style="left:901px;width:95px;top:346.75px">Photo</div>
<div class="c" style="left:996px;width:70px;top:346.75px">20</div>
<div class="c" style="left:1137px;width:49px;top:346.75px">28588</div>
<div class="c" style="left:237px;width:143px;top:357.00px">24 Aug 2018 11:47:36</div>
<div class="c" style="left:380px;width:47px;top:357.00px">1</div>
<div class="c" style="left:711px;width:190px;top:357.00px">Analogue values request</div>
<div class="c" style="left:901px;width:95px;top:357.00px">MCIM</div>
<div class="c" style="left:1137px;width:49px;top:357.00px">28587</div>
<div class="c" style="left:237px;width:143px;top:367.25px">24 Aug 2018 11:47:36</div>
<div class="c" style="left:380px;width:47px;top:367.25px">1</div>
<div class="c" style="left:711px;width:190px;top:367.25px">Analogue values</div>
<div class="c" style="left:901px;width:95px;top:367.25px">Sounder</div>
<div class="c" style="left:996px;width:70px;top:367.25px">20</div>
<div class="c" style="left:1137px;width:49px;top:367.25px">28586</div>
<div class="c" style="left:237px;width:143px;top:377.50px">24 Aug 2018 11:47:35</div>
<div class="c" style="left:380px;width:47px;top:377.50px">1</div>
<div class="c" style="left:711px;width:190px;top:377.50px">Analogue values request</div>
<div class="c" style="left:901px;width:95px;top:377.50px">Sounder</div>
<div class="c" style="left:1137px;width:49px;top:377.50px">28585</div>
<div class="c" style="left:237px;width:143px;top:387.75px">24 Aug 2018 11:47:33</div>
<div class="c" style="left:380px;width:47px;top:387.75px">1</div>
<div class="c" style="left:711px;width:190px;top:387.75px">Analogue values</div>
<div class="c" style="left:901px;width:95px;top:387.75px">Zone Monitor</div>
<div class="c" style="left:996px;width:70px;top:387.75px">136</div>
<div class="c" style="left:1137px;width:49px;top:387.75px">28584</div>
<div class="c" style="left:237px;width:143px;top:398.00px">24 Aug 2018 11:47:32</div>
<div class="c" style="left:380px;width:47px;top:398.00px">1</div>
<div class="c" style="left:711px;width:190px;top:398.00px">Analogue values</div>
<div class="c" style="left:901px;width:95px;top:398.00px">Sounder</div>
<div class="c" style="left:996px;width:70px;top:398.00px">20</div>
<div class="c" style="left:1137px;width:49px;top:398.00px">28583</div>
<div class="c" style="left:237px;width:143px;top:408.25px">24 Aug 2018 11:47:32</div>
<div class="c" style="left:380px;width:47px;top:408.25px">1</div>
<div class="c" style="left:711px;width:190px;top:408.25px">Analogue values request</div>
<div class="c" style="left:901px;width:95px;top:408.25px">Photo</div>
<div class="c" style="left:1137px;width:49px;top:408.25px">28582</div>
<div class="c" style="left:237px;width:143px;top:418.50px">24 Aug 2018 11:47:31</div>
<div class="c" style="left:380px;width:47px;top:418.50px">1</div>
<div class="c" style="left:711px;width:190px;top:418.50px">Analogue values request</div>
<div class="c" style="left:901px;width:95px;top:418.50px">Sounder</div>
<div class="c" style="left:1137px;width:49px;top:418.50px">28581</div>
<div class="c" style="left:237px;width:143px;top:428.75px">24 Aug 2018 11:47:24</div>
<div class="c" style="left:380px;width:47px;top:428.75px">1</div>
<div class="c" style="left:711px;width:190px;top:428.75px">Device Disabled</div>
<div class="c" style="left:1137px;width:49px;top:428.75px">28580</div>
<div class="c" style="left:237px;width:143px;top:439.00px">24 Aug 2018 11:47:24</div>
<div class="c" style="left:380px;width:47px;top:439.00px">1</div>
<div class="c" style="left:711px;width:190px;top:439.00px">Analogue values request</div>
<div class="c" style="left:901px;width:95px;top:439.00px">Zone Monitor</div>
<div class="c" style="left:1137px;width:49px;top:439.00px">28579</div>
<div class="c" style="left:237px;width:143px;top:449.25px">24 Aug 2018 11:47:23</div>
<div class="c" style="left:380px;width:47px;top:449.25px">1</div>
<div class="c" style="left:711px;width:190px;top:449.25px">Analogue values request</div>
<div class="c" style="left:901px;width:95px;top:449.25px">Sounder</div>
<div class="c" style="left:1137px;width:49px;top:449.25px">28578</div>
<div class="c" style="left:237px;width:143px;top:459.50px">24 Aug 2018 11:38:32</div>
<div class="c" style="left:380px;width:47px;top:459.50px">1</div>
<div class="c" style="left:711px;width:190px;top:459.50px">Analogue values request</div>
<div class="c" style="left:1137px;width:49px;top:459.50px">28568</div>
<div class="c" style="left:237px;width:143px;top:469.75px">24 Aug 2018 11:38:27</div>
<div class="c" style="left:380px;width:47px;top:469.75px">1</div>
<div class="c" style="left:711px;width:190px;top:469.75px">Analogue values request</div>
<div class="c" style="left:1137px;width:49px;top:469.75px">28567</div>
<div class="c" style="left:237px;width:143px;top:480.00px">24 Aug 2018 11:38:22</div>
<div class="c" style="left:380px;width:47px;top:480.00px">1</div>
<div class="c" style="left:711px;width:190px;top:480.00px">Analogue values request</div>
<div class="c" style="left:1137px;width:49px;top:480.00px">28566</div>
<div class="c" style="left:237px;width:143px;top:490.25px">24 Aug 2018 11:38:22</div>
<div class="c" style="left:380px;width:47px;top:490.25px">1</div>
<div class="c" style="left:711px;width:190px;top:490.25px">Analogue values</div>
<div class="c" style="left:901px;width:95px;top:490.25px">Call Point</div>
<div class="c" style="left:996px;width:70px;top:490.25px">20</div>
<div class="c" style="left:1137px;width:49px;top:490.25px">28565</div>
<div class="c" style="left:237px;width:143px;top:500.50px">24 Aug 2018 11:38:21</div>
<div class="c" style="left:380px;width:47px;top:500.50px">1</div>
<div class="c" style="left:711px;width:190px;top:500.50px">Analogue values request</div>
<div class="c" style="left:1137px;width:49px;top:500.50px">28564</div>
<div class="c" style="left:237px;width:143px;top:510.75px">24 Aug 2018 11:38:20</div>
<div class="c" style="left:380px;width:47px;top:510.75px">1</div>
<div class="c" style="left:711px;width:190px;top:510.75px">Analogue values</div>
<div class="c" style="left:901px;width:95px;top:510.75px">Photo</div>
<div class="c" style="left:996px;width:70px;top:510.75px">20</div>
<div class="c" style="left:1137px;width:49px;top:510.75px">28563</div>
<div class="c" style="left:237px;width:143px;top:521.00px">24 Aug 2018 11:38:19</div>
<div class="c" style="left:380px;width:47px;top:521.00px">1</div>
<div class="c" style="left:711px;width:190px;top:521.00px">Analogue values request</div>
<div class="c" style="left:1137px;width:49px;top:521.00px">28562</div>
<div class="c" style="left:237px;width:143px;top:531.25px">24 Aug 2018 11:38:19</div>
<div class="c" style="left:380px;width:47px;top:531.25px">1</div>
<div class="c" style="left:711px;width:190px;top:531.25px">Analogue values</div>
<div class="c" style="left:901px;width:95px;top:531.25px">Sounder</div>
<div class="c" style="left:996px;width:70px;top:531.25px">20</div>
<div class="c" style="left:1137px;width:49px;top:531.25px">28561</div>
<div class="c" style="left:237px;width:143px;top:541.50px">24 Aug 2018 11:38:18</div>
<div class="c" style="left:380px;width:47px;top:541.50px">1</div>
<div class="c" style="left:711px;width:190px;top:541.50px">Analogue values request</div>
<div class="c" style="left:1137px;width:49px;top:541.50px">28560</div>
<div class="c" style="left:237px;width:143px;top:551.75px">24 Aug 2018 11:38:18</div>
<div class="c" style="left:380px;width:47px;top:551.75px">1</div>
<div class="c" style="left:711px;width:190px;top:551.75px">Analogue values</div>
<div class="c" style="left:901px;width:95px;top:551.75px">Photo</div>
<div class="c" style="left:996px;width:70px;top:551.75px">18</div>
<div class="c" style="left:1137px;width:49px;top:551.75px">28559</div>
<div class="c" style="left:237px;width:143px;top:562.00px">24 Aug 2018 11:38:16</div>
<div class="c" style="left:380px;width:47px;top:562.00px">1</div>
<div class="c" style="left:711px;width:190px;top:562.00px">Analogue values request</div>
<div class="c" style="left:1137px;width:49px;top:562.00px">28558</div>
<div class="c" style="left:237px;width:143px;top:572.25px">24 Aug 2018 11:38:16</div>
<div class="c" style="left:380px;width:47px;top:572.25px">1</div>
<div class="c" style="left:711px;width:190px;top:572.25px">Analogue values</div>
<div class="c" style="left:901px;width:95px;top:572.25px">Opto / Heat</div>
<div class="c" style="left:996px;width:70px;top:572.25px">22</div>
<div class="c" style="left:1137px;width:49px;top:572.25px">28557</div>
<div class="c" style="left:237px;width:143px;top:582.50px">24 Aug 2018 11:38:15</div>
<div class="c" style="left:380px;width:47px;top:582.50px">1</div>
<div class="c" style="left:711px;width:190px;top:582.50px">Analogue values request</div>
<div class="c" style="left:1137px;width:49px;top:582.50px">28556</div>
<div class="c" style="left:237px;width:143px;top:592.75px">24 Aug 2018 11:38:15</div>
<div class="c" style="left:380px;width:47px;top:592.75px">1</div>
<div class="c" style="left:711px;width:190px;top:592.75px">Analogue values</div>
<div class="c" style="left:901px;width:95px;top:592.75px">Sounder</div>
<div class="c" style="left:996px;width:70px;top:592.75px">20</div>
<div class="c" style="left:1137px;width:49px;top:592.75px">28555</div>
<div class="c" style="left:237px;width:143px;top:603.00px">24 Aug 2018 11:38:14</div>
<div class="c" style="left:380px;width:47px;top:603.00px">1</div>
<div class="c" style="left:711px;width:190px;top:603.00px">Analogue values request</div>
<div class="c" style="left:1137px;width:49px;top:603.00px">28554</div>
<div class="c" style="left:237px;width:143px;top:613.25px">24 Aug 2018 11:38:14</div>
<div class="c" style="left:380px;width:47px;top:613.25px">1</div>
<div class="c" style="left:427px;width:47px;top:613.25px">1</div>
<div class="c" style="left:474px;width:47px;top:613.25px">3</div>
<div class="c" style="left:521px;width:47px;top:613.25px">1</div>
<div class="c" style="left:568px;width:143px;top:613.25px">Address 3</div>
<div class="c" style="left:711px;width:190px;top:613.25px">Analogue values</div>
<div class="c" style="left:901px;width:95px;top:613.25px">IO Unit</div>
<div class="c" style="left:996px;width:70px;top:613.25px">136</div>
<div class="c" style="left:1137px;width:49px;top:613.25px">28553</div>
<div class="c" style="left:237px;width:143px;top:623.50px">24 Aug 2018 11:38:12</div>
<div class="c" style="left:380px;width:47px;top:623.50px">1</div>
<div class="c" style="left:427px;width:47px;top:623.50px">1</div>
<div class="c" style="left:474px;width:47px;top:623.50px">4</div>
<div class="c" style="left:711px;width:190px;top:623.50px">Analogue values request</div>
<div class="c" style="left:1137px;width:49px;top:623.50px">28552</div>
<div class="c" style="left:237px;width:143px;top:633.75px">24 Aug 2018 11:38:12</div>
<div class="c" style="left:380px;width:47px;top:633.75px">1</div>
<div class="c" style="left:427px;width:47px;top:633.75px">1</div>
<div class="c" style="left:474px;width:47px;top:633.75px">2</div>
<div class="c" style="left:521px;width:47px;top:633.75px">1</div>
<div class="c" style="left:568px;width:143px;top:633.75px">Address 2</div>
<div class="c" style="left:711px;width:190px;top:633.75px">Analogue values</div>
<div class="c" style="left:901px;width:95px;top:633.75px">MCIM</div>
<div class="c" style="left:996px;width:70px;top:633.75px">20</div>
<div class="c" style="left:1137px;width:49px;top:633.75px">28551</div>
<div class="c" style="left:237px;width:143px;top:644.00px">24 Aug 2018 11:38:10</div>
<div class="c" style="left:380px;width:47px;top:644.00px">1</div>
<div class="c" style="left:427px;width:47px;top:644.00px">1</div>
<div class="c" style="left:474px;width:47px;top:644.00px">3</div>
<div class="c" style="left:711px;width:190px;top:644.00px">Analogue values request</div>
<div class="c" style="left:1137px;width:49px;top:644.00px">28550</div>
<div class="c" style="left:237px;width:143px;top:654.25px">24 Aug 2018 11:38:10</div>
<div class="c" style="left:380px;width:47px;top:654.25px">1</div>
<div class="c" style="left:427px;width:47px;top:654.25px">1</div>
<div class="c" style="left:474px;width:47px;top:654.25px">1</div>
<div class="c" style="left:521px;width:47px;top:654.25px">1</div>
<div class="c" style="left:568px;width:143px;top:654.25px">Address 1</div>
<div class="c" style="left:711px;width:190px;top:654.25px">Analogue values</div>
<div class="c" style="left:901px;width:95px;top:654.25px">Zone Monitor</div>
<div class="c" style="left:996px;width:70px;top:654.25px">136</div>
<div class="c" style="left:1137px;width:49px;top:654.25px">28549</div>
<div class="c" style="left:237px;width:143px;top:664.50px">24 Aug 2018 11:38:09</div>
<div class="c" style="left:380px;width:47px;top:664.50px">1</div>
<div class="c" style="left:427px;width:47px;top:664.50px">1</div>
<div class="c" style="left:474px;width:47px;top:664.50px">2</div>
<div class="c" style="left:711px;width:190px;top:664.50px">Analogue values request</div>
<div class="c" style="left:1137px;width:49px;top:664.50px">28548</div>
<div class="c" style="left:237px;width:143px;top:674.75px">24 Aug 2018 11:38:08</div>
<div class="c" style="left:380px;width:47px;top:674.75px">1</div>
<div class="c" style="left:427px;width:47px;top:674.75px">1</div>
<div class="c" style="left:474px;width:47px;top:674.75px">1</div>
<div class="c" style="left:711px;width:190px;top:674.75px">Analogue values request</div>
<div class="c" style="left:1137px;width:49px;top:674.75px">28546</div>
<div class="c" style="left:237px;width:143px;top:685.00px">24 Aug 2018 11:38:03</div>
<div class="c" style="left:380px;width:47px;top:685.00px">1</div>
<div class="c" style="left:427px;width:47px;top:685.00px">1</div>
<div class="c" style="left:568px;width:143px;top:685.00px">DF6100</div>
<div class="c" style="left:711px;width:190px;top:685.00px">Panel Enabled States</div>
<div class="c" style="left:1137px;width:49px;top:685.00px">28543</div>
<div class="c" style="left:237px;width:143px;top:695.25px">24 Aug 2018 11:37:20</div>
<div class="c" style="left:568px;width:143px;top:695.25px">Site Monitor</div>
<div class="c" style="left:711px;width:190px;top:695.25px">Global Reset</div>
<div class="c" style="left:1137px;width:49px;top:695.25px">28536</div>
<div class="c" style="left:237px;width:143px;top:705.50px">24 Aug 2018 11:37:11</div>
<div class="c" style="left:568px;width:143px;top:705.50px">Site Monitor</div>
<div class="c" style="left:711px;width:190px;top:705.50px">Global Reset</div>
<div class="c" style="left:1137px;width:49px;top:705.50px">28535</div>
<div class="c" style="left:237px;width:143px;top:715.75px">24 Aug 2018 11:36:58</div>
<div class="c" style="left:568px;width:143px;top:715.75px">Site Monitor</div>
<div class="c" style="left:711px;width:190px;top:715.75px">Global Reset</div>
<div class="c" style="left:1137px;width:49px;top:715.75px">28534</div>
<div class="c" style="left:237px;width:143px;top:726.00px">24 Aug 2018 11:36:41</div>
<div class="c" style="left:568px;width:143px;top:726.00px">Site Monitor</div>
<div class="c" style="left:711px;width:190px;top:726.00px">Global Reset</div>
<div class="c" style="left:1137px;width:49px;top:726.00px">28529</div>
<div class="hl" style="top:315.95px"></div>
<div class="hl" style="top:326.20px"></div>
<div class="hl" style="top:336.45px"></div>
<div class="hl" style="top:346.70px"></div>
<div class="hl" style="top:356.95px"></div>
<div class="hl" style="top:367.20px"></div>
<div class="hl" style="top:377.45px"></div>
<div class="hl" style="top:387.70px"></div>
<div class="hl" style="top:397.95px"></div>
<div class="hl" style="top:408.20px"></div>
<div class="hl" style="top:418.45px"></div>
<div class="hl" style="top:428.70px"></div>
<div class="hl" style="top:438.95px"></div>
<div class="hl" style="top:449.20px"></div>
<div class="hl" style="top:459.45px"></div>
<div class="hl" style="top:469.70px"></div>
<div class="hl" style="top:479.95px"></div>
<div class="hl" style="top:490.20px"></div>
<div class="hl" style="top:500.45px"></div>
<div class="hl" style="top:510.70px"></div>
<div class="hl" style="top:520.95px"></div>
<div class="hl" style="top:531.20px"></div>
<div class="hl" style="top:541.45px"></div>
<div class="hl" style="top:551.70px"></div>
<div class="hl" style="top:561.95px"></div>
<div class="hl" style="top:572.20px"></div>
<div class="hl" style="top:582.45px"></div>
<div class="hl" style="top:592.70px"></div>
<div class="hl" style="top:602.95px"></div>
<div class="hl" style="top:613.20px"></div>
<div class="hl" style="top:623.45px"></div>
<div class="hl" style="top:633.70px"></div>
<div class="hl" style="top:643.95px"></div>
<div class="hl" style="top:654.20px"></div>
<div class="hl" style="top:664.45px"></div>
<div class="hl" style="top:674.70px"></div>
<div class="hl" style="top:684.95px"></div>
<div class="hl" style="top:695.20px"></div>
<div class="hl" style="top:705.45px"></div>
<div class="hl" style="top:715.70px"></div>
<div class="hl" style="top:725.95px"></div>
<div class="hl" style="top:736.20px"></div>
<div class="vl" style="left:379.1px;top:305.5px;height:431.50px"></div>
<div class="vl" style="left:426.1px;top:305.5px;height:431.50px"></div>
<div class="vl" style="left:473.1px;top:305.5px;height:431.50px"></div>
<div class="vl" style="left:520.1px;top:305.5px;height:431.50px"></div>
<div class="vl" style="left:567.1px;top:305.5px;height:431.50px"></div>
<div class="vl" style="left:710.1px;top:305.5px;height:431.50px"></div>
<div class="vl" style="left:900.1px;top:305.5px;height:431.50px"></div>
<div class="vl" style="left:995.1px;top:305.5px;height:431.50px"></div>
<div class="vl" style="left:1065.1px;top:305.5px;height:431.50px"></div>
<div class="vl" style="left:1136.1px;top:305.5px;height:431.50px"></div>
<div class="vl" style="left:1185.1px;top:305.5px;height:431.50px"></div>
<div id="status" class="abs"><span style="left:3.5px;letter-spacing:.02px">Network 1: Panel scan completed successfully. (24/08/2018 11:39:12)</span><span style="right:12.5px">Connected to localhost:60000 (127.0.0.1)</span></div>
<div id="dlg" class="abs">
<div id="dlgtitle" class="abs"></div>
<span class="t" style="left:6px;top:5.7px;font-size:9.4px;line-height:11px;color:#222;transform-origin:0 50%;transform:scaleX(.965)">Edit Network: &lt;Network 1&gt;</span>
<div class="abs" style="left:322px;top:10.5px;width:7px;height:1px;background:#ddd"></div>
<div class="abs" style="left:356.5px;top:7px;width:7.5px;height:7.5px;border:1px solid #222"></div>
<svg class="abs" style="left:390.5px;top:6px" width="9" height="9" viewBox="0 0 9 9"><path d="M0.7 0.7L8.3 8.3M8.3 0.7L0.7 8.3" stroke="#222" stroke-width="1" fill="none"/></svg>
<div class="gb" style="top:37.0px;height:112.0px"></div>
<div class="gbl" style="top:32.0px">Network Details</div>
<div class="gb" style="top:160.0px;height:150.0px"></div>
<div class="gbl" style="top:155.0px">Communication Port Details</div>
<div class="gb" style="top:321.0px;height:51.0px"></div>
<div class="gbl" style="top:316.0px">Modes</div>
<div class="gb" style="top:383.0px;height:32.5px"></div>
<div class="gbl" style="top:378.0px">Security</div>
<div class="lb" style="top:48.5px">Network Name</div>
<div class="lb" style="top:68.0px">Network Address ID</div>
<div class="lb" style="top:87.8px">Ec0232 Address (0 = Auto-Select)</div>
<div class="lb" style="top:108.0px">Network Type</div>
<div class="lb" style="top:128.8px">Network Protocol</div>
<div class="lb" style="top:172.0px">Serial Port</div>
<div class="lb" style="top:192.5px">Poll Interval (Milliseconds)</div>
<div class="lb" style="top:212.5px">Time Out (Milliseconds)</div>
<div class="lb" style="top:232.5px">Max Connection Failures</div>
<div class="lb" style="top:252.5px">Debug Path</div>
<div class="lb" style="top:394.8px">Level 2 Pin Code</div>
<div class="in" style="top:46.7px;border-color:#2b7db6"><span class="v" style="background:#2b8ae0;color:#fff;height:10.5px;line-height:10.5px;margin-top:1px;padding-right:1px">Network 1</span></div>
<div class="in" style="top:66.3px"><span class="v">0</span><div class="sp"></div></div>
<div class="in" style="top:86.0px"><span class="v">0</span><div class="sp"></div></div>
<div class="in" style="top:190.5px"><span class="v">200</span><div class="sp"></div></div>
<div class="in" style="top:210.7px"><span class="v">500</span><div class="sp"></div></div>
<div class="in" style="top:230.5px"><span class="v">10</span><div class="sp"></div></div>
<div class="in" style="top:250.5px"><span class="v"></span></div>
<div class="in" style="top:393.1px;left:134.0px;width:265.0px"></div>
<div class="cb" style="top:105.8px"><span class="v">Ec0232</span></div>
<div class="cb" style="top:126.5px"><span class="v">DF6000 Fire Network V1</span></div>
<div class="cb" style="top:170.1px"><span class="v">COM4</span></div>
<div class="ck" style="top:271.7px"></div>
<div class="ckl" style="top:271.5px">Enable Debugging</div>
<div class="ck" style="top:291.4px"></div>
<div class="ckl" style="top:291.2px">Bind to USB Device (Port Change Protection)</div>
<div class="ck" style="top:332.4px"><svg style="position:absolute;left:0;top:0" width="8" height="8" viewBox="0 0 8 8"><path d="M1 3.9L3.1 6.1L7 1.5" stroke="#222" stroke-width="1" fill="none"/></svg></div>
<div class="ckl" style="top:332.2px">Enable Missing Panel Detection</div>
<div class="ck" style="top:352.4px"><svg style="position:absolute;left:0;top:0" width="8" height="8" viewBox="0 0 8 8"><path d="M1 3.9L3.1 6.1L7 1.5" stroke="#222" stroke-width="1" fill="none"/></svg></div>
<div class="ckl" style="top:352.2px">Hide Clock Synchronization Messages</div>
<div class="btn" style="left:247.3px;width:75px;border:1.6px solid #1a78d0;top:426.3px"><svg style="position:absolute;left:0;top:0" width="30" height="24" viewBox="683.4 582.4 30 24"><defs><linearGradient id="gck" x1="0" y1="0" x2="1" y2="1"><stop offset="0" stop-color="#2f8a3c"/><stop offset="1" stop-color="#69bd58"/></linearGradient></defs><path d="M690.2 594.6 L695.8 601.6 L703.8 587.6" stroke="url(#gck)" stroke-width="3.8" stroke-linecap="round" stroke-linejoin="round" fill="none"/></svg><span class="t" style="left:52.5px;top:7.8px;line-height:10px">Ok</span></div>
<div class="btn" style="left:328.5px;width:75px;top:426.3px"><svg style="position:absolute;left:0;top:0" width="30" height="24" viewBox="764 581.8 30 24"><path d="M770.8 587.8 L785 600.8 M785 587.8 L770.8 600.8" stroke="#cf4430" stroke-width="4.2" stroke-linecap="round" fill="none"/></svg><span class="t" style="left:38.6px;top:8.5px;line-height:10px">Cancel</span></div>
<div class="abs" style="right:1px;bottom:1px;width:7px;height:7px;background:repeating-linear-gradient(135deg,transparent 0,transparent 1.5px,#c4c4c4 1.5px,#c4c4c4 2.5px);clip-path:polygon(100% 0,100% 100%,0 100%)"></div>
</div>
</body></html>
